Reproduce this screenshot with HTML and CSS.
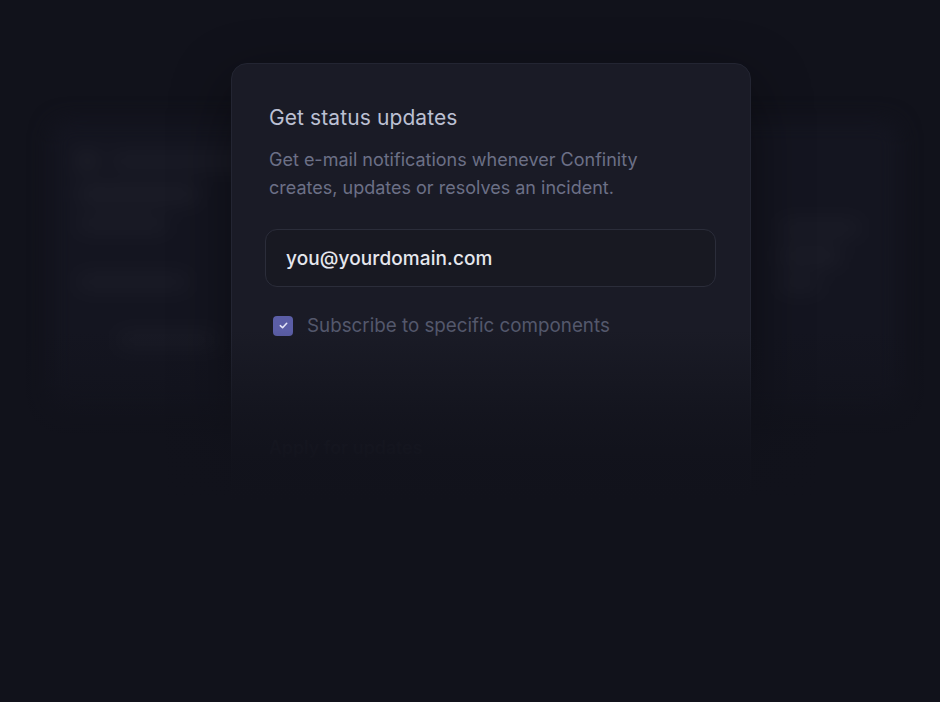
FILE: index.html
```html
<!DOCTYPE html>
<html>
<head>
<meta charset="utf-8">
<link rel="stylesheet" href="styles.css">
</head>
<body>
<div class="stage">
  <div class="backdrop">
    <div class="bg-card">
      <div class="bg-left">
        <div class="bg-head"><span class="bg-dot"></span><span class="bg-bar w140"></span></div>
        <div class="bg-bar w120 tall"></div>
        <div class="bg-bar w90"></div>
        <div class="bg-bar w110 mt40"></div>
        <div class="bg-bar w100 mt40 ind"></div>
      </div>
      <div class="bg-right">
        <div class="bg-bar w80"></div>
        <div class="bg-bar w60 tall"></div>
        <div class="bg-bar w40"></div>
      </div>
    </div>
  </div>
  <div class="modal">
    <h2 class="title">Get status updates</h2>
    <p class="desc">Get e-mail notifications whenever Confinity creates, updates or resolves an incident.</p>
    <div class="input">you@yourdomain.com</div>
    <label class="check">
      <span class="box"><svg viewBox="0 0 12 12" width="11" height="11"><path d="M2.5 6.2 L5 8.5 L9.5 3.5" fill="none" stroke="#e4e5f7" stroke-width="1.7" stroke-linecap="round" stroke-linejoin="round"/></svg></span>
      <span class="check-label">Subscribe to specific components</span>
    </label>
    <div class="button-text">Apply for updates</div>
  </div>
  <div class="fade"></div>
</div>
</body>
</html>
```

FILE: styles.css
```css
* { box-sizing: border-box; }
html, body {
  margin: 0;
  height: 100%;
  background: #11121b;
  font-family: Inter, "Noto Sans", "Liberation Sans", sans-serif;
  overflow: hidden;
}
.stage {
  position: relative;
  width: 940px;
  height: 702px;
  background: #11121b;
  overflow: hidden;
}
.backdrop {
  position: absolute;
  left: 0; top: 0; right: 0; bottom: 0;
  filter: blur(10px);
}
.bg-card {
  margin: 120px 40px 0 50px;
  height: 290px;
  background: #141520;
  border-radius: 18px;
  display: flex;
  justify-content: space-between;
  padding: 32px 40px 20px 28px;
}
.bg-left { display: flex; flex-direction: column; gap: 16px; }
.bg-right { display: flex; flex-direction: column; gap: 14px; padding-top: 70px; }
.bg-head { display: flex; align-items: center; gap: 14px; }
.bg-dot { width: 18px; height: 18px; border-radius: 50%; background: #22232d; }
.bg-bar { height: 12px; border-radius: 6px; background: #1d1e29; }
.bg-bar.tall { height: 16px; }
.bg-bar.mt40 { margin-top: 30px; }
.bg-bar.ind { margin-left: 40px; }
.w140 { width: 140px; } .w120 { width: 120px; } .w110 { width: 110px; }
.w100 { width: 100px; } .w90 { width: 90px; } .w80 { width: 80px; }
.w60 { width: 60px; } .w40 { width: 40px; }

.modal {
  position: absolute;
  left: 231px;
  top: 63px;
  width: 520px;
  height: 460px;
  background: #1a1b26;
  border: 1px solid #232532;
  border-radius: 16px;
  padding: 40px 34px 0 37px;
  box-shadow: 0 20px 60px rgba(0,0,0,0.45);
}
.title {
  margin: 0;
  font-size: 21px;
  font-weight: 400;
  color: #bcc0d3;
  line-height: 28px;
  letter-spacing: 0.1px;
}
.desc {
  margin: 14px 0 0;
  font-size: 18px;
  line-height: 28px;
  color: #6c7086;
  width: 420px;
}
.input {
  margin: 27px 0 0 -4px;
  height: 58px;
  border: 1px solid #2b2d3a;
  border-radius: 12px;
  background: #181922;
  padding: 0 20px;
  display: flex;
  align-items: center;
  font-size: 19px;
  font-weight: 500;
  color: #e6e7ee;
  letter-spacing: 0.1px;
}
.check {
  display: flex;
  align-items: center;
  gap: 14px;
  margin: 27px 0 0 4px;
}
.box {
  width: 20px; height: 20px;
  border-radius: 4px;
  background: #5b5ea6;
  display: flex; align-items: center; justify-content: center;
}
.check-label {
  font-size: 18.8px;
  color: #54586c;
}
.button-text {
  margin-top: 100px;
  font-size: 18px;
  font-weight: 500;
  color: #2a2c38;
}
.fade {
  position: absolute;
  left: 0; right: 0; top: 330px; bottom: 0;
  background: linear-gradient(to bottom, rgba(17,18,27,0) 0px, rgba(17,18,27,0.75) 90px, rgba(17,18,27,0.93) 130px, #11121b 170px);
}
```
